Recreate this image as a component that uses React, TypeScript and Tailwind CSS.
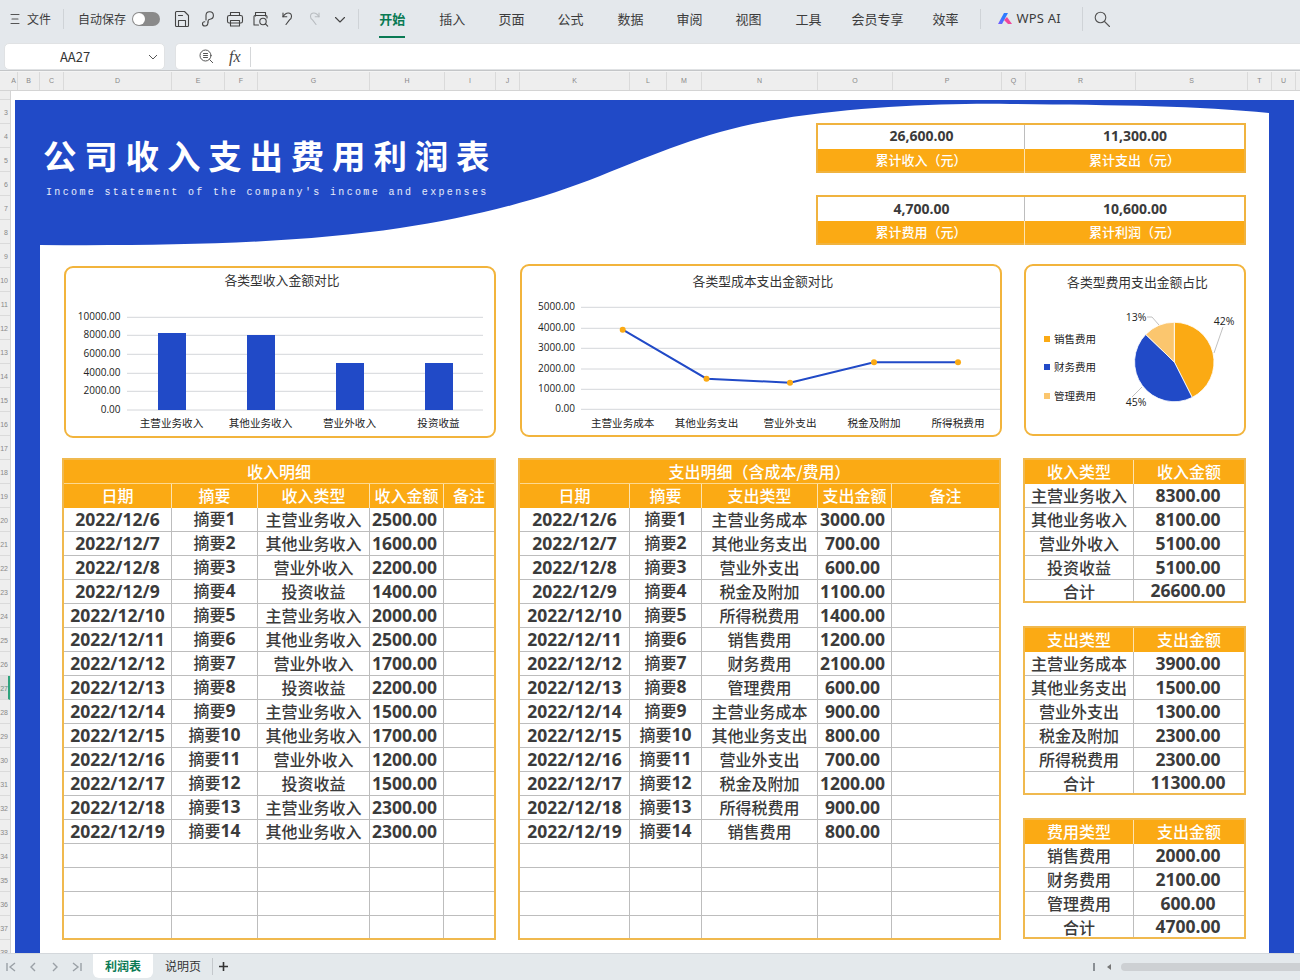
import React from "react";

const colLabels: [string, number][] = [
  ["A", 8], ["B", 22], ["C", 24], ["D", 108], ["E", 53], ["F", 33], ["G", 112], ["H", 75], ["I", 51], ["J", 24], ["K", 110],
  ["L", 37], ["M", 35], ["N", 116], ["O", 75], ["P", 109], ["Q", 24], ["R", 110], ["S", 112], ["T", 24], ["U", 24],
];

const rowNums = Array.from({ length: 36 }, (_, i) => i + 3);

function Stroke({ children, w = 18, h = 18, c = "#444" }: { children: React.ReactNode; w?: number; h?: number; c?: string }) {
  return (
    <svg width={w} height={h} viewBox={`0 0 ${w} ${h}`} fill="none" stroke={c} strokeWidth="1.1" strokeLinecap="round" strokeLinejoin="round">
      {children}
    </svg>
  );
}

function Toolbar() {
  const tabs: [string, string][] = [
    ["插入", "ml-[34px]"], ["页面", "ml-[33px]"], ["公式", "ml-[33px]"], ["数据", "ml-[34px]"], ["审阅", "ml-[33px]"],
    ["视图", "ml-[33px]"], ["工具", "ml-[34px]"], ["会员专享", "ml-[30px]"], ["效率", "ml-[29px]"],
  ];
  return (
    <div className="h-[43px] shrink-0 bg-[#e4e8ec] flex items-center pl-[10px] pb-[5px] text-[#3c3c3c] text-[12px]">
      <Stroke w={10} h={12} c="#555"><path d="M1 1.5h8M2 6h6M1 10.5h8" /></Stroke>
      <span className="ml-[7px] w-[24px]">文件</span>
      <div className="ml-[12px] w-px h-[20px] bg-[#cfd3d7]" />
      <span className="ml-[14px] w-[48px]">自动保存</span>
      <div className="ml-[6px] w-[28px] h-[14px] rounded-full bg-[#8a8a8a] flex items-center pl-[1px]">
        <div className="w-[12px] h-[12px] rounded-full bg-white" />
      </div>
      <div className="ml-[13px] flex items-center gap-[8.4px]">
        <Stroke>
          <path d="M2.5 2.5a1 1 0 0 1 1-1h8l4 4v10a1 1 0 0 1-1 1h-11a1 1 0 0 1-1-1z" />
          <path d="M5.5 5.5h4" />
          <path d="M5.5 16.5v-6h7v6" />
        </Stroke>
        <Stroke>
          <path d="M7 10V5.5a3.7 3.7 0 1 1 4 3.7c-1.2.1-2 .8-2 2v.8" />
          <path d="M9 12c0 2.300-1.300 4-3 4s-2.500-1.300-2.500-2.300 1-2 2.300-2" />
        </Stroke>
        <Stroke>
          <path d="M4.500 5.500V2.500h9v3" />
          <rect x="1.500" y="5.500" width="15" height="7.500" rx="1.800" />
          <path d="M4.500 10.500h9v5.500h-9z" />
        </Stroke>
        <Stroke>
          <path d="M3.500 6V2.500h10V6" />
          <path d="M6.500 15H2V6.500c0-.5.300-1 1-1h11c.7 0 1 .5 1 1V8" />
          <circle cx="11" cy="11.500" r="3.200" />
          <path d="M13.400 13.900l2.300 2.300" />
        </Stroke>
        <Stroke>
          <path d="M4 3v3.800h3.800" />
          <path d="M4 6.800C5.300 4.500 7 3 9.200 3c2 0 3.300 1.600 3.300 3.400 0 1.500-.8 2.600-2 3.500L7 14.500" />
        </Stroke>
        <Stroke c="#b8bcc0">
          <path d="M14 3v3.800h-3.800" />
          <path d="M14 6.800C12.700 4.500 11 3 8.800 3c-2 0-3.300 1.600-3.300 3.400 0 1.500.8 2.600 2 3.500l3.500 4.600" />
        </Stroke>
        <Stroke>
          <path d="M4.500 7.500L9 12l4.500-4.500" />
        </Stroke>
      </div>
      <div className="ml-[9px] w-px h-[20px] bg-[#cfd3d7]" />
      <div className="ml-[20px] h-[38px] flex items-center text-[13px]">
        <div className="relative h-[38px] flex items-center font-bold text-[#0a7a54]">
          <span>开始</span>
          <div className="absolute left-0 right-0 top-[36px] h-[2px] bg-[#0a7a54]" />
        </div>
        {tabs.map(([t, m]) => (
          <span key={t} className={m}>{t}</span>
        ))}
        <div className="ml-[21px] w-px h-[20px] bg-[#cfd3d7]" />
        <svg className="ml-[16px]" width="16" height="14" viewBox="0 0 16 14">
          <defs>
            <linearGradient id="wg" x1="0" y1="1" x2="1" y2="0">
              <stop offset="0" stopColor="#7c5cff" />
              <stop offset="0.55" stopColor="#2f7bff" />
              <stop offset="1" stopColor="#2f7bff" />
            </linearGradient>
          </defs>
          <path d="M1 12 L7 1 L11 1 L5 12 Z" fill="url(#wg)" />
          <path d="M7 8 L10 5 L15 12 L11 12 Z" fill="#f0479b" />
        </svg>
        <span className="ml-[4px] text-[13px] tracking-[0.2px] font-['Noto_Sans']">WPS AI</span>
        <div className="ml-[21px] w-px h-[24px] bg-[#cfd3d7]" />
        <svg className="ml-[11px]" width="16" height="16" viewBox="0 0 16 16" fill="none" stroke="#555" strokeWidth="1.1" strokeLinecap="round">
          <circle cx="6.500" cy="6.500" r="5.300" />
          <path d="M10.500 10.500l5 5" />
        </svg>
      </div>
    </div>
  );
}

function FormulaBar() {
  return (
    <div className="h-[28px] shrink-0 bg-[#e4e8ec] flex items-start pl-[4px] border-b border-[#c4c6c8]">
      <div className="w-[161px] h-[27px] bg-white rounded-[5px] flex items-center pl-[55px] pr-[6px] justify-between border border-[#e0e2e4]">
        <span className="text-[13px] text-[#333]">AA27</span>
        <svg width="10" height="6" viewBox="0 0 10 6" fill="none" stroke="#555" strokeWidth="1"><path d="M1 1l4 4 4-4" /></svg>
      </div>
      <div className="ml-[10px] flex-1 h-[27px] bg-white rounded-l-[5px] flex items-center pl-[23px] border border-r-0 border-[#e0e2e4]">
        <svg width="15" height="15" viewBox="0 0 15 15" fill="none" stroke="#555" strokeWidth="1" strokeLinecap="round">
          <circle cx="6.500" cy="6.500" r="5.500" />
          <path d="M4.500 4.500h4M4.500 6.500h4M4.500 8.500h4M10.700 10.700l3 3" />
        </svg>
        <span className="ml-[15px] w-[20px] text-[16px] italic font-['Liberation_Serif'] text-[#444]">fx</span>
        <div className="ml-[1px] w-px h-[20px] bg-[#d5d7d9]" />
      </div>
    </div>
  );
}

function ColumnHeader() {
  return (
    <div className="h-[20px] shrink-0 bg-[#eeeeee] flex items-stretch pl-[10px] border-b border-[#d4d4d4] border-t border-t-[#f4f4f4]">
      {colLabels.map(([l, w]) => (
        <div key={l} style={{ width: w }} className="shrink-0 flex items-center justify-center text-[7px] text-[#888] border-r border-[#dadada] font-['Liberation_Sans']">
          {l}
        </div>
      ))}
    </div>
  );
}

function RowHeader() {
  return (
    <div className="w-[11px] shrink-0 bg-[#eeeeee] flex flex-col overflow-hidden border-r border-[#d4d4d4]">
      <div className="h-[9px] shrink-0 border-b border-[#dadada]" />
      {rowNums.map((n) => (
        <div
          key={n}
          className={
            "h-[24px] shrink-0 flex items-center justify-end pt-[3px] text-[7px] border-b border-[#dadada] font-['Liberation_Sans'] " +
            (n === 27 ? "bg-[#e0e0e0] text-[#6f8f80] border-r-2 border-r-[#2fa37c]" : "pr-[2px] text-[#888]")
          }
        >
          <span className="shrink-0">{n}</span>
        </div>
      ))}
    </div>
  );
}

function Kpi({ a, al, b, bl, valPb, className = "" }: { a: string; al: string; b: string; bl: string; valPb: string; className?: string }) {
  const val = "bg-white flex items-center justify-center pl-[1px] text-[14px] font-bold text-[#3b3b3b] font-['Open_Sans'] " + valPb;
  const lab = "flex items-center justify-center pb-[3px] text-[13px] font-medium text-white";
  return (
    <div className={"w-[430px] h-[50px] bg-[#fbaa14] border-2 border-[#f0b33f] grid grid-cols-[207px_1fr] grid-rows-[24px_24px] " + className}>
      <div className={val + " border-r border-[#bdbdbd]"}>{a}</div>
      <div className={val}>{b}</div>
      <div className={lab + " border-r border-[#fde3b0]"}>{al}</div>
      <div className={lab}>{bl}</div>
    </div>
  );
}

const greyLine = "#d4d6da";
const axisText = { fontFamily: "'Open Sans','Noto Sans CJK SC',sans-serif", fontSize: 10, fill: "#222" } as const;
const catText = { fontFamily: "'Noto Sans CJK SC',sans-serif", fontSize: 10.6, fill: "#222" } as const;

function BarChart() {
  const ticks: [string, number][] = [["10000.00", 317.3], ["8000.00", 335.3], ["6000.00", 354.3], ["4000.00", 373.3], ["2000.00", 391.3], ["0.00", 410]];
  const bars: [string, number, number][] = [["主营业务收入", 158, 333], ["其他业务收入", 247, 335], ["营业外收入", 336, 363], ["投资收益", 425, 363]];
  return (
    <div className="w-[432px] h-[172px] mt-[2px] rounded-[9px] border-2 border-[#f2b43c] bg-white overflow-hidden">
      <div className="h-[24px] pt-[3px] pl-[4px] text-center text-[12.8px] leading-[18px] text-[#333]">各类型收入金额对比</div>
      <svg className="block" width="428" height="144" viewBox="66 292 428 144">
        {ticks.map(([t, y]) => (
          <g key={t}>
            <line x1="127" x2="483" y1={y} y2={y} stroke={greyLine} />
            <text x="120.500" y={y + 2.800} textAnchor="end" style={axisText}>{t}</text>
          </g>
        ))}
        {bars.map(([l, x, top]) => (
          <g key={l}>
            <rect x={x} y={top} width="28" height={410 - top} fill="#214ac7" />
            <text x={x + 13.500} y="427" textAnchor="middle" style={catText}>{l}</text>
          </g>
        ))}
      </svg>
    </div>
  );
}

function LineChart() {
  const ticks: [string, number][] = [["5000.00", 307.3], ["4000.00", 328.3], ["3000.00", 348.3], ["2000.00", 369], ["1000.00", 389.3], ["0.00", 409.3]];
  const pts: [string, number, number][] = [["主营业务成本", 622.7, 329.7], ["其他业务支出", 706.5, 378.7], ["营业外支出", 790, 382.7], ["税金及附加", 874, 362.3], ["所得税费用", 958, 362.3]];
  return (
    <div className="w-[482px] h-[173px] rounded-[9px] border-2 border-[#f2b43c] bg-white overflow-hidden">
      <div className="h-[25px] pt-[6px] pl-[4px] text-center text-[12.8px] leading-[18px] text-[#333]">各类型成本支出金额对比</div>
      <svg className="block" width="478" height="144" viewBox="522 291 478 144">
        {ticks.map(([t, y]) => (
          <g key={t}>
            <line x1="581" x2="1000" y1={y} y2={y} stroke={greyLine} />
            <text x="575" y={y + 3} textAnchor="end" style={axisText}>{t}</text>
          </g>
        ))}
        <polyline points={pts.map((p) => `${p[1]},${p[2]}`).join(" ")} fill="none" stroke="#214ac7" strokeWidth="2" />
        {pts.map(([l, x, y]) => (
          <g key={l}>
            <circle cx={x} cy={y} r="3" fill="#fbaa14" />
            <text x={x} y="427" textAnchor="middle" style={catText}>{l}</text>
          </g>
        ))}
      </svg>
    </div>
  );
}

function PieChart() {
  const cx = 1174.3, cy = 362, r = 39.7;
  const pt = (deg: number) => {
    const a = ((deg - 90) * Math.PI) / 180;
    return `${(cx + r * Math.cos(a)).toFixed(2)} ${(cy + r * Math.sin(a)).toFixed(2)}`;
  };
  const slices: [number, number, string][] = [
    [0, 153.2, "#fbaa14"],
    [153.2, 314, "#214ac7"],
    [314, 360, "#fbc66e"],
  ];
  const legend: [string, string, number][] = [["销售费用", "#fbaa14", 339], ["财务费用", "#214ac7", 367], ["管理费用", "#fbc66e", 396]];
  const pct: [string, number, number][] = [["13%", 1136, 321], ["42%", 1224, 325], ["45%", 1136, 406]];
  return (
    <div className="w-[222px] h-[172px] rounded-[9px] border-2 border-[#f2b43c] bg-white overflow-hidden">
      <div className="h-[27px] pt-[7px] pl-[5px] text-center text-[12.8px] leading-[18px] text-[#333]">各类型费用支出金额占比</div>
      <svg className="block" width="218" height="141" viewBox="1026 293 218 141">
        {legend.map(([l, c, y]) => (
          <g key={l}>
            <rect x="1044" y={y - 3} width="6" height="6" fill={c} />
            <text x="1054" y={y + 3.600} style={{ ...catText, fontSize: 10.5 }}>{l}</text>
          </g>
        ))}
        {slices.map(([a, b, c]) => (
          <path key={c} d={`M${cx} ${cy} L${pt(a)} A${r} ${r} 0 ${b - a > 180 ? 1 : 0} 1 ${pt(b)} Z`} fill={c} stroke="#fff" strokeWidth="0.8" />
        ))}
        <polyline points="1147,317 1152,317 1159,325" fill="none" stroke="#b0b0b0" strokeWidth="0.8" />
        <polyline points="1223,327 1214,353" fill="none" stroke="#b0b0b0" strokeWidth="0.8" />
        <polyline points="1132,397 1142,387" fill="none" stroke="#b0b0b0" strokeWidth="0.8" />
        {pct.map(([t, x, y]) => (
          <text key={t} x={x} y={y} textAnchor="middle" style={{ ...axisText, fontSize: 10.5 }}>{t}</text>
        ))}
      </svg>
    </div>
  );
}

const numCls = "font-['Open_Sans'] font-bold text-[17.5px] text-[#3b3b3b]";

function Mixed({ text }: { text: string }) {
  const m = text.match(/^([^\d]+)(\d+)$/);
  if (!m) return <span>{text}</span>;
  return (
    <span>
      {m[1]}
      <span className={numCls}>{m[2]}</span>
    </span>
  );
}

function Cell({ v, last, bottom, short, shift = "" }: { v: string; last?: boolean; bottom?: boolean; short?: string; shift?: string }) {
  const numeric = /^[\d/.]+$/.test(v);
  return (
    <div
      className={
        "flex items-center justify-center whitespace-nowrap border-[#bdbdbd] " +
        shift + " " +
        (bottom && short ? short + " " : "h-[24px] ") +
        (last ? "" : "border-r ") +
        (bottom ? "" : "border-b ") +
        (numeric ? numCls : "text-[#3b3b3b] text-[16px] font-medium " + (bottom ? "" : "pb-[2px]"))
      }
    >
      {numeric ? v : <Mixed text={v} />}
    </div>
  );
}

const income: string[][] = [
  ["2022/12/6", "摘要1", "主营业务收入", "2500.00"],
  ["2022/12/7", "摘要2", "其他业务收入", "1600.00"],
  ["2022/12/8", "摘要3", "营业外收入", "2200.00"],
  ["2022/12/9", "摘要4", "投资收益", "1400.00"],
  ["2022/12/10", "摘要5", "主营业务收入", "2000.00"],
  ["2022/12/11", "摘要6", "其他业务收入", "2500.00"],
  ["2022/12/12", "摘要7", "营业外收入", "1700.00"],
  ["2022/12/13", "摘要8", "投资收益", "2200.00"],
  ["2022/12/14", "摘要9", "主营业务收入", "1500.00"],
  ["2022/12/15", "摘要10", "其他业务收入", "1700.00"],
  ["2022/12/16", "摘要11", "营业外收入", "1200.00"],
  ["2022/12/17", "摘要12", "投资收益", "1500.00"],
  ["2022/12/18", "摘要13", "主营业务收入", "2300.00"],
  ["2022/12/19", "摘要14", "其他业务收入", "2300.00"],
];

const expense: string[][] = [
  ["2022/12/6", "摘要1", "主营业务成本", "3000.00"],
  ["2022/12/7", "摘要2", "其他业务支出", "700.00"],
  ["2022/12/8", "摘要3", "营业外支出", "600.00"],
  ["2022/12/9", "摘要4", "税金及附加", "1100.00"],
  ["2022/12/10", "摘要5", "所得税费用", "1400.00"],
  ["2022/12/11", "摘要6", "销售费用", "1200.00"],
  ["2022/12/12", "摘要7", "财务费用", "2100.00"],
  ["2022/12/13", "摘要8", "管理费用", "600.00"],
  ["2022/12/14", "摘要9", "主营业务成本", "900.00"],
  ["2022/12/15", "摘要10", "其他业务支出", "800.00"],
  ["2022/12/16", "摘要11", "营业外支出", "700.00"],
  ["2022/12/17", "摘要12", "税金及附加", "1200.00"],
  ["2022/12/18", "摘要13", "所得税费用", "900.00"],
  ["2022/12/19", "摘要14", "销售费用", "800.00"],
];

const headCls = "h-[24px] pb-[2px] bg-[#fbaa14] text-white text-[16px] font-medium flex items-center justify-center ";

function Detail({ title, type, rows, cols, width, className = "" }: { title: string; type: string; rows: string[][]; cols: string; width: string; className?: string }) {
  const all = [...rows, ...Array.from({ length: 4 }, () => ["", "", "", "", ""])];
  const heads = ["日期", "摘要", type, "支出金额", "备注"];
  if (type === "收入类型") heads[3] = "收入金额";
  return (
    <div className={width + " border-2 border-[#f0b94f] bg-white " + className}>
      <div className={headCls + "border-b border-[#fdd98f]"}>{title}</div>
      <div className={"grid " + cols}>
        {heads.map((h, i) => (
          <div key={h} className={headCls + (i < 4 ? "border-r border-[#fde3b0]" : "")}>
            {h}
          </div>
        ))}
      </div>
      <div className={"grid " + cols}>
        {all.map((r, ri) =>
          [0, 1, 2, 3, 4].map((ci) => (
            <Cell key={ri + "-" + ci} v={r[ci] ?? ""} last={ci === 4} bottom={ri === all.length - 1} short="h-[22px]" shift={ci === 3 ? "pr-[4px]" : ""} />
          ))
        )}
      </div>
    </div>
  );
}

function Summary({ heads, rows, className = "" }: { heads: [string, string]; rows: [string, string][]; className?: string }) {
  return (
    <div className={"w-[223px] border-2 border-[#f0b94f] bg-white " + className}>
      <div className="grid grid-cols-[109px_1fr]">
        {heads.map((h, i) => (
          <div key={h} className={headCls + (i === 0 ? "border-r border-[#fde3b0]" : "")}>
            {h}
          </div>
        ))}
        {rows.map(([a, b], i) => (
          <React.Fragment key={a}>
            <Cell v={a} bottom={i === rows.length - 1} short="h-[21px]" />
            <Cell v={b} last bottom={i === rows.length - 1} short="h-[21px]" shift="pr-[2px]" />
          </React.Fragment>
        ))}
      </div>
    </div>
  );
}

function Wave() {
  return (
    <svg className="absolute left-0 top-0" width="1279" height="853" viewBox="15 100 1279 853">
      <path
        d="M40 245 C 180 246 300 243 400 228 C 470 218 540 200 600 176 C 660 152 710 130 780 119 C 860 106 950 103 1010 104 C 1110 105 1200 106 1269 113 L1269 953 L40 953 Z"
        fill="#fff"
      />
    </svg>
  );
}

function Sheet() {
  return (
    <div className="flex-1 min-w-0 bg-white overflow-hidden pt-[9px] pl-[4px]">
      <div className="relative w-[1279px] h-[853px] bg-[#214ac7]">
        <Wave />
        <div className="relative flex flex-col pl-[47px]">
          <div className="flex h-[163px]">
            <div className="w-[754px] pt-[32px] text-white">
              <div className="ml-[-19px] h-[46px] flex items-center text-[33.5px] font-bold tracking-[7.8px] whitespace-nowrap font-['Noto_Sans_CJK_SC']">公司收入支出费用利润表</div>
              <div className="ml-[-16px] mt-[8px] text-[10px] leading-[14px] tracking-[2.35px] whitespace-nowrap font-['Liberation_Mono'] text-white/90">Income statement of the company's income and expenses</div>
            </div>
            <div className="pt-[23px] flex flex-col">
              <Kpi valPb="pb-[3px]" a="26,600.00" al="累计收入（元）" b="11,300.00" bl="累计支出（元）" />
              <Kpi valPb="pb-[1px]" className="mt-[22px]" a="4,700.00" al="累计费用（元）" b="10,600.00" bl="累计利润（元）" />
            </div>
          </div>
          <div className="flex items-start pl-[2px] mt-[1px]">
            <BarChart />
            <div className="ml-[24px]"><LineChart /></div>
            <div className="ml-[22px]"><PieChart /></div>
          </div>
          <div className="flex items-start mt-[20px]">
            <Detail title="收入明细" type="收入类型" rows={income} width="w-[434px]" cols="grid-cols-[108px_86px_112px_74px_50px]" />
            <Detail className="ml-[22px]" title="支出明细（含成本/费用）" type="支出类型" rows={expense} width="w-[483px]" cols="grid-cols-[110px_72px_116px_74px_107px]" />
            <div className="ml-[22px] flex flex-col">
              <Summary heads={["收入类型", "收入金额"]} rows={[["主营业务收入", "8300.00"], ["其他业务收入", "8100.00"], ["营业外收入", "5100.00"], ["投资收益", "5100.00"], ["合计", "26600.00"]]} />
              <Summary className="mt-[23px]" heads={["支出类型", "支出金额"]} rows={[["主营业务成本", "3900.00"], ["其他业务支出", "1500.00"], ["营业外支出", "1300.00"], ["税金及附加", "2300.00"], ["所得税费用", "2300.00"], ["合计", "11300.00"]]} />
              <Summary className="mt-[23px]" heads={["费用类型", "支出金额"]} rows={[["销售费用", "2000.00"], ["财务费用", "2100.00"], ["管理费用", "600.00"], ["合计", "4700.00"]]} />
            </div>
          </div>
        </div>
      </div>
    </div>
  );
}

function TabBar() {
  const nav = (d: string) => (
    <svg width="12" height="12" viewBox="0 0 12 12" fill="none" stroke="#9aa0a6" strokeWidth="1.4">
      <path d={d} />
    </svg>
  );
  return (
    <div className="h-[27px] shrink-0 bg-[#e4e9ec] border-t border-[#d4d8dc] flex items-start pl-[5px] text-[12px] text-[#333]">
      <div className="h-[25px] flex items-center gap-[10px]">
        {nav("M2 2v8M10 2L5 6l5 4")}
        {nav("M8 2L4 6l4 4")}
        {nav("M4 2l4 4-4 4")}
        {nav("M2 2l5 4-5 4M10 2v8")}
      </div>
      <div className="ml-[10px] w-[60px] h-[24px] bg-white rounded-b-[6px] flex items-center justify-center pb-[1px] text-[#0a7a54] font-bold">利润表</div>
      <div className="ml-[12px] w-[36px] h-[24px] flex items-center justify-center pb-[1px]">说明页</div>
      <div className="ml-[11px] mt-[4px] w-px h-[17px] bg-[#c4c8cc]" />
      <svg className="ml-[5px] mt-[7px]" width="11" height="11" viewBox="0 0 11 11" stroke="#333" strokeWidth="1.6"><path d="M5.500 1v9M1 5.500h9" /></svg>
      <div className="ml-auto flex items-center h-[25px]">
        <div className="w-[2px] h-[8px] bg-[#8a8f94]" />
        <div className="ml-[12px] w-0 h-0 border-y-[3px] border-y-transparent border-r-[4px] border-r-[#777]" />
        <div className="ml-[10px] w-[179px] h-[8px] rounded-l-full bg-[#cdd0d3]" />
      </div>
    </div>
  );
}

export default function App() {
  return (
    <div className="w-[1300px] h-[980px] overflow-hidden flex flex-col bg-white font-['Noto_Sans_CJK_SC',sans-serif]">
      <Toolbar />
      <FormulaBar />
      <ColumnHeader />
      <div className="flex-1 min-h-0 flex overflow-hidden">
        <RowHeader />
        <Sheet />
      </div>
      <TabBar />
    </div>
  );
}
